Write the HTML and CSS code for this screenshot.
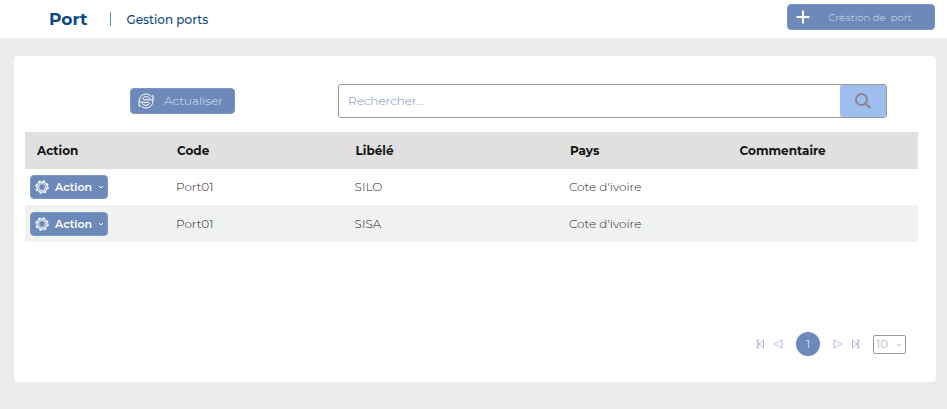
FILE: index.html
```html
<!DOCTYPE html>
<html lang="fr">
<head>
<meta charset="utf-8">
<meta name="viewport" content="width=device-width, initial-scale=1">
<title>Gestion ports</title>
<link rel="stylesheet" href="styles.css">
</head>
<body>
<header class="topbar">
  <h1 class="topbar-title">Port</h1>
  <span class="topbar-divider"></span>
  <p class="topbar-subtitle">Gestion ports</p>
  <button class="btn btn-create" type="button">
    <svg class="icon-plus" viewBox="0 0 14 14" aria-hidden="true"><path d="M7 0.5v13M0.5 7h13"/></svg>
    <span class="create-label">Création de &nbsp;port</span>
  </button>
</header>

<main class="card">
  <div class="toolbar">
    <button class="btn btn-refresh" type="button">
      <svg class="icon-refresh" viewBox="0 0 16 16" aria-hidden="true">
        <path d="M1.500 5.500C2.500 2.800 5 1 8 1c2.300 0 4.300 1 5.600 2.600L15 2.500V7h-4.500l1.400-1.500C11 4.400 9.600 3.700 8 3.700c-1.500 0-2.800.7-3.600 1.800M4.400 5.500L6 7l4-.5"/>
        <path d="M14.500 10.500C13.500 13.200 11 15 8 15c-2.300 0-4.300-1-5.600-2.600L1 13.500V9h4.500l-1.400 1.500C5 11.600 6.400 12.300 8 12.300c1.500 0 2.800-.7 3.600-1.800M11.600 10.500L10 9l-4 .5"/>
        <path d="M1.500 5.500L1 9M14.500 10.500L15 7"/>
      </svg>
      <span>Actualiser</span>
    </button>
    <form class="search" role="search">
      <input class="search-input" type="text" placeholder="Rechercher..." aria-label="Rechercher">
      <button class="search-button" type="button" aria-label="Lancer la recherche">
        <svg class="icon-search" viewBox="0 0 16 16" aria-hidden="true"><circle cx="6.500" cy="6.500" r="5.500"/><path d="M10.500 10.500l4.800 4.500"/></svg>
      </button>
    </form>
  </div>

  <table class="ports">
    <colgroup><col class="col-action"><col class="col-code"><col class="col-label"><col class="col-country"><col></colgroup>
    <thead>
      <tr><th scope="col" class="action-head">Action</th><th scope="col">Code</th><th scope="col">Libélé</th><th scope="col">Pays</th><th scope="col">Commentaire</th></tr>
    </thead>
    <tbody>
      <tr>
        <td class="action-cell">
          <button class="btn btn-action" type="button">
            <svg class="icon-gear" viewBox="0 0 16 16" aria-hidden="true"><circle class="gear-teeth" cx="8" cy="8" r="7"/><circle class="gear-ring" cx="8" cy="8" r="5.900"/><circle cx="8" cy="8" r="4"/></svg>
            <span>Action</span>
            <svg class="icon-chevron" viewBox="0 0 6 4" aria-hidden="true"><path d="M1 1l2 2 2-2"/></svg>
          </button>
        </td>
        <td>Port01</td><td>SILO</td><td>Cote d'ivoire</td><td></td>
      </tr>
      <tr>
        <td class="action-cell">
          <button class="btn btn-action" type="button">
            <svg class="icon-gear" viewBox="0 0 16 16" aria-hidden="true"><circle class="gear-teeth" cx="8" cy="8" r="7"/><circle class="gear-ring" cx="8" cy="8" r="5.900"/><circle cx="8" cy="8" r="4"/></svg>
            <span>Action</span>
            <svg class="icon-chevron" viewBox="0 0 6 4" aria-hidden="true"><path d="M1 1l2 2 2-2"/></svg>
          </button>
        </td>
        <td>Port01</td><td>SISA</td><td>Cote d'ivoire</td><td></td>
      </tr>
    </tbody>
  </table>

  <nav class="pager" aria-label="Pagination">
    <button class="pager-step" type="button" aria-label="Première page"><svg class="icon-page" viewBox="0 0 10 10" aria-hidden="true"><path d="M2 .5v9M3.500 .5v9M8.500 1v8L4 5z"/></svg></button>
    <button class="pager-step" type="button" aria-label="Page précédente"><svg class="icon-page" viewBox="0 0 10 10" aria-hidden="true"><path d="M9 .8v8.400L1 5z"/></svg></button>
    <button class="pager-current" type="button" aria-current="page">1</button>
    <button class="pager-step" type="button" aria-label="Page suivante"><svg class="icon-page" viewBox="0 0 10 10" aria-hidden="true"><path d="M1 .8v8.400L9 5z"/></svg></button>
    <button class="pager-step" type="button" aria-label="Dernière page"><svg class="icon-page" viewBox="0 0 10 10" aria-hidden="true"><path d="M8 .5v9M6.500 .5v9M1.500 1v8L6 5z"/></svg></button>
    <div class="page-size">
      <select class="page-size-select" aria-label="Lignes par page"><option>10</option><option>20</option><option>50</option></select>
      <svg class="icon-chevron page-size-chevron" viewBox="0 0 6 4" aria-hidden="true"><path d="M1 1l2 2 2-2"/></svg>
    </div>
  </nav>
</main>
</body>
</html>
```
FILE: styles.css
```css
* { box-sizing: border-box; }

body {
  margin: 0;
  background: #ebebeb;
  color: #1e2021;
  font-family: Montserrat, Inter, "Open Sans", sans-serif;
  font-size: 12px;
  line-height: 16px;
}

button, input, select { font: inherit; }
button { cursor: pointer; }
svg { display: block; flex: none; fill: none; stroke: currentColor; }

.topbar {
  display: flex;
  align-items: center;
  height: 38px;
  padding: 0 12px 0 49px;
  background: #fff;
  color: #0b4a86;
}
.topbar-title { margin: 0; font-size: 17px; line-height: 20px; font-weight: 700; }
.topbar-divider { width: 1px; height: 14px; margin: 0 15px 0 23px; background: #5f8ab5; }
.topbar-subtitle { margin: 0; padding-top: 2px; font-size: 12px; font-weight: 500; }

.btn {
  display: flex;
  align-items: center;
  border: 1px solid #7d96c3;
  border-radius: 4px;
  background: #6d89b9;
  color: #fff;
}
.btn-create {
  width: 148px;
  height: 26px;
  margin: -4px 0 0 auto;
  padding: 0 8px;
}
.icon-plus { width: 14px; height: 14px; stroke-width: 2; }
.create-label { flex: 1; padding: 2px 0 0 4px; color: #d3ddee; font-size: 10px; font-weight: 300; }

.card {
  margin: 18px 11px 27px 14px;
  padding: 28px 18px 26px 11px;
  border-radius: 4px;
  background: #fff;
}

.toolbar {
  display: flex;
  align-items: center;
  justify-content: space-between;
  margin-bottom: 14px;
  padding: 0 31px 0 105px;
}
.btn-refresh { gap: 10px; height: 26px; padding: 0 11px 0 7px; color: #dfe6f3; font-weight: 300; }
.icon-refresh { width: 16px; height: 16px; color: #fff; }

.search {
  display: flex;
  flex: 0 1 549px;
  height: 34px;
  margin-left: 24px;
  border: 1px solid #999;
  border-radius: 3px;
}
.search-input {
  flex: 1;
  min-width: 0;
  padding: 0 9px;
  border: 0;
  border-radius: 3px;
  background: #fff;
  color: #6d89b9;
  font-weight: 300;
}
.search-input::placeholder { color: #6d89b9; opacity: 1; }
.search-button {
  display: grid;
  place-items: center;
  width: 46px;
  padding: 0;
  border: 0;
  border-radius: 2px;
  background: #9fbeee;
  color: #888;
}
.icon-search { width: 16px; height: 16px; stroke-width: 2; }

.ports { width: 100%; border-collapse: collapse; table-layout: fixed; text-align: left; }
.col-action { width: 151px; }
.col-code { width: 20%; }
.col-label { width: 24%; }
.col-country { width: 19%; }
.ports th { height: 37px; padding: 1px 1px 0; background: #e0e0e0; color: #151515; font-weight: 700; }
.ports .action-head { padding-left: 12px; }
.ports td { height: 36px; padding: 0; font-weight: 300; }
.ports tbody tr:nth-child(even) { background: #f0f2f1; }
.ports tbody tr:nth-child(even) td { height: 37px; }
.ports .action-cell { padding-left: 5px; }

.btn-action { gap: 6px; width: 78px; height: 24px; padding: 0 4px; font-size: 11px; font-weight: 600; }
.icon-gear { width: 14px; height: 14px; }
.gear-teeth { stroke-width: 1.500; stroke-dasharray: 2.750 2.750; }
.gear-ring { stroke-width: 1.300; }
.icon-chevron { width: 6px; height: 4px; margin-left: auto; }

.pager {
  display: flex;
  align-items: center;
  justify-content: flex-end;
  gap: 8px;
  margin-top: 90px;
  padding-right: 12px;
}
.pager-step { padding: 0; border: 0; background: none; color: #b4c1da; }
.icon-page { width: 10px; height: 10px; }
.pager-current {
  width: 24px;
  height: 24px;
  margin: 0 5px;
  padding: 0;
  border: 0;
  border-radius: 50%;
  background: #6d89b9;
  color: #fff;
  font-weight: 300;
}
.page-size { position: relative; margin-left: 4px; color: #b4c1da; }
.page-size-select {
  display: block;
  width: 33px;
  height: 19px;
  padding: 0 2px;
  border: 1px solid #999;
  border-radius: 2px;
  appearance: none;
  background: #fff;
  color: #91a5ca;
  font-weight: 300;
}
.page-size-chevron { position: absolute; top: 8px; right: 4px; pointer-events: none; }
```
